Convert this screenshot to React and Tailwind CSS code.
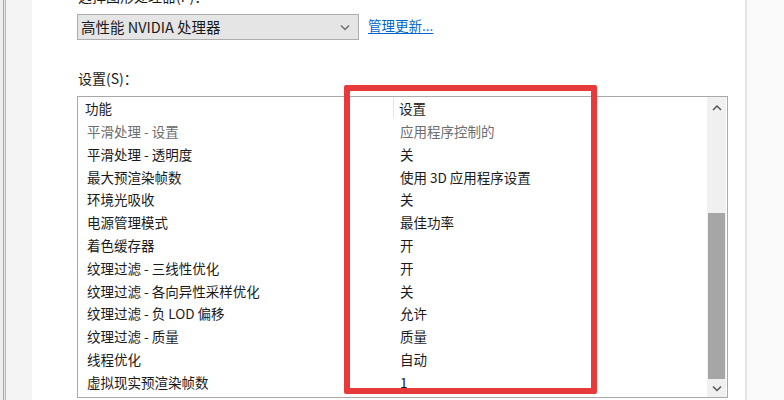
import React from "react";

const rows = [
  ["平滑处理 - 设置", "应用程序控制的", true],
  ["平滑处理 - 透明度", "关"],
  ["最大预渲染帧数", "使用 3D 应用程序设置"],
  ["环境光吸收", "关"],
  ["电源管理模式", "最佳功率"],
  ["着色缓存器", "开"],
  ["纹理过滤 - 三线性优化", "开"],
  ["纹理过滤 - 各向异性采样优化", "关"],
  ["纹理过滤 - 负 LOD 偏移", "允许"],
  ["纹理过滤 - 质量", "质量"],
  ["线程优化", "自动"],
  ["虚拟现实预渲染帧数", "1"],
];

const font = { fontFamily: '"Noto Sans CJK SC", "Noto Sans", sans-serif' };

function Chevron({ up, className }) {
  return (
    <svg width="10" height="7" viewBox="0 0 10 7" className={className}>
      <path
        d={up ? "M1 6 L5 2 L9 6" : "M1 1.5 L5 5.5 L9 1.5"}
        fill="none"
        stroke="#555"
        strokeWidth="1.5"
      />
    </svg>
  );
}

export default function App() {
  return (
    <div
      className="w-[784px] h-[400px] flex bg-white relative overflow-hidden text-[#1a1a1a]"
      style={font}
    >
      {/* left frame strip */}
      <div className="w-[32px] h-full flex shrink-0 bg-[#f4f4f4]">
        <div className="w-[3px] h-full bg-[#ededed]" />
        <div className="w-[1px] h-full bg-[#a9a9a9]" />
        <div className="w-[1px] h-full bg-[#e6e6e6]" />
        <div className="w-[1px] h-full bg-[#b9b9b9]" />
      </div>

      {/* main content */}
      <div className="w-[713px] h-full pl-[45px] flex flex-col shrink-0">
        <div className="h-[20px] mt-[-14px] text-[14px] leading-[20px] pl-[1px]">
          选择图形处理器(P)：
        </div>
        <div className="mt-[8px] flex items-center">
          <div className="w-[282px] h-[26px] bg-[#e5e5e5] border border-[#adadad] flex items-center pl-[3px] pr-[8px]">
            <span className="text-[14.5px] leading-none flex-1">高性能 NVIDIA 处理器</span>
            <Chevron className="opacity-80" />
          </div>
          <a className="ml-[9px] text-[13.5px] text-[#0066cc] underline underline-offset-2 mt-[-4px]">
            管理更新...
          </a>
        </div>
        <div className="mt-[28px] h-[20px] text-[14px] leading-[20px] pl-[1px]">设置(S)：</div>
        <div className="mt-[8px] w-[651px] h-[302px] border border-[#a9a9a9] flex bg-white">
          <div className="flex-1 flex flex-col text-[13.5px]">
            <div className="h-[22.8px] flex items-center">
              <div className="w-[315px] pl-[7px]">功能</div>
              <div className="h-[20px] w-[1px] bg-[#e3e3e3]" />
              <div className="pl-[5px]">设置</div>
            </div>
            {rows.map(([a, b, dim]) => (
              <div
                key={a}
                className={`h-[22.8px] flex items-center ${dim ? "text-[#6e6e6e]" : ""}`}
              >
                <div className="w-[316px] pl-[9px] whitespace-nowrap">{a}</div>
                <div className="pl-[6px] whitespace-nowrap">{b}</div>
              </div>
            ))}
          </div>
          <div className="w-[19px] h-full flex flex-col bg-[#f0f0f0] mr-[1px]">
            <div className="h-[17px] flex items-center justify-center pt-[3px]">
              <Chevron up />
            </div>
            <div className="h-[99px]" />
            <div className="h-[166px] bg-[#a6a6a6] mx-[1px]" />
            <div className="h-[18px] flex items-center justify-center">
              <Chevron />
            </div>
          </div>
        </div>
      </div>

      {/* right frame */}
      <div className="w-[2px] h-full bg-[#e4e4e4] shrink-0" />
      <div className="flex-1 h-full bg-[#fafafa]" />

      {/* red annotation box */}
      <div className="absolute left-[344px] top-[85px] w-[253px] h-[309px] border-[6px] border-[#e8393b] rounded-[2px]" />
    </div>
  );
}
